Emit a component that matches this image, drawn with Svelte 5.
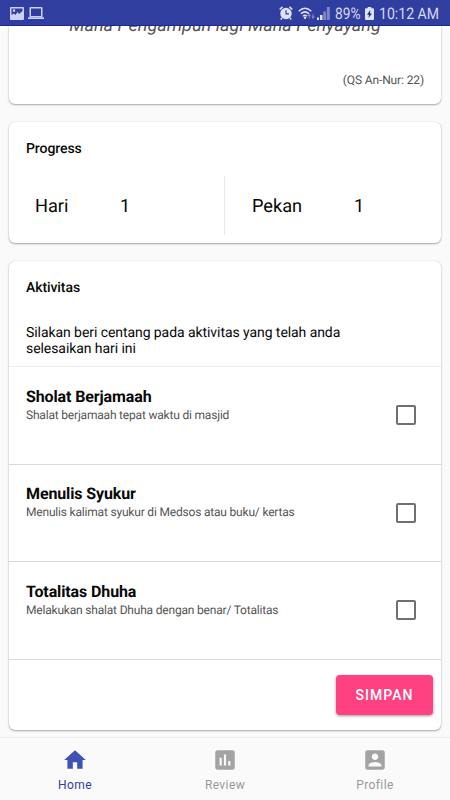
<script>
  const activities = $state([
    { title: 'Sholat Berjamaah', detail: 'Shalat berjamaah tepat waktu di masjid', done: false },
    { title: 'Menulis Syukur', detail: 'Menulis kalimat syukur di Medsos atau buku/ kertas', done: false },
    { title: 'Totalitas Dhuha', detail: 'Melakukan shalat Dhuha dengan benar/ Totalitas', done: false }
  ]);
  const tabs = [
    { label: 'Home', icon: 'M10 20v-6h4v6h5v-8h3L12 3 2 12h3v8z' },
    { label: 'Review', icon: 'M19 3H5c-1.1 0-2 .9-2 2v14c0 1.1.9 2 2 2h14c1.1 0 2-.9 2-2V5c0-1.1-.9-2-2-2zM9 17H7v-7h2v7zm4 0h-2V7h2v10zm4 0h-2v-4h2v4z' },
    { label: 'Profile', icon: 'M3 5v14c0 1.1.89 2 2 2h14c1.1 0 2-.9 2-2V5c0-1.1-.9-2-2-2H5c-1.11 0-2 .9-2 2zm12 4c0 1.66-1.34 3-3 3s-3-1.34-3-3 1.34-3 3-3 3 1.34 3 3zm-9 8c0-2 4-3.1 6-3.1s6 1.1 6 3.1v1H6v-1z' }
  ];
  let active = $state('Home');
</script>

<div class="screen">
  <header class="status">
    <svg class="picture" width="14" height="13" viewBox="0 0 14 13"><path fill-rule="evenodd" d="M1 0h12q1 0 1 1v11q0 1-1 1H1q-1 0-1-1V1q0-1 1-1zm.5 1.500v6.500L4 6.500l1.500 1.500 2-3 1.500 2 3.500-3V1.500zM4 2.300a1.300 1.300 0 1 1 0 2.600 1.300 1.300 0 0 1 0-2.600z"/></svg>
    <svg class="laptop" width="16" height="12" viewBox="0 0 16 12"><path fill-rule="evenodd" d="M2.500 0h11q1 0 1 1v9h-13V1q0-1 1-1zm.5 1.500V9h10V1.500zM0 10.300h16V12H0z"/></svg>
    <span class="grow"></span>
    <svg class="alarm" width="14" height="14" viewBox="0 0 14 14"><circle cx="7" cy="7.500" r="5.700"/><path d="M.7 3.500 3.500.8M10.500.8l2.800 2.700M3 12l-1.300 1.500M11 12l1.300 1.500" stroke="#dfe1f5" stroke-width="1.600"/><path d="M7 4.300v3.500h3" fill="none" stroke="#303f9f" stroke-width="1.200"/></svg>
    <svg class="wifi" width="17" height="13" viewBox="0 0 17 13"><path d="M.7 4.200Q7 -1.600 13.300 4.200M2.900 6.800Q7 3 11 6.800M5 9.200Q7 7.400 9 9.200" fill="none" stroke="#dfe1f5" stroke-width="1.500"/><circle cx="7" cy="10.700" r="1.200"/><path d="M11.200 6.500 13 9h-1.300v2.500h-1V9H9.500zm3.800 5.500-1.700-2.500h1.200V7h1v2.500h1.200z" opacity=".5"/></svg>
    <svg class="signal" width="13" height="13" viewBox="0 0 13 13"><path d="M0 10.500h2V13H0zM3 8h2.500v5H3z"/><path d="M6.300 4.500h2.700V13H6.300zM9.800 0h3v13h-3z" opacity=".45"/></svg>
    <span class="percent">89%</span>
    <svg class="battery" width="9" height="13" viewBox="0 0 9 13"><path d="M2.700 0h3.600v1.300H8q1 0 1 1V12q0 1-1 1H1q-1 0-1-1V2.300q0-1 1-1h1.700z"/><path d="M5.300 3 2 7.700h2L3.500 11 7 6.400H5z" fill="#202b70"/></svg>
    <span class="time">10:12 AM</span>
  </header>

  <main>
    <section class="card quote">
      <p class="verse">Maha Pengampun lagi Maha Penyayang</p>
      <p class="source">(QS An-Nur: 22)</p>
    </section>

    <section class="card progress">
      <h2>Progress</h2>
      <div class="stats">
        <div class="stat"><span class="name day">Hari</span><span>1</span></div>
        <div class="stat week"><span class="name">Pekan</span><span>1</span></div>
      </div>
    </section>

    <section class="card activities">
      <h2>Aktivitas</h2>
      <p class="hint">Silakan beri centang pada aktivitas yang telah anda<br />selesaikan hari ini</p>
      {#each activities as item}
        <label class="row">
          <span class="copy"><strong>{item.title}</strong><small>{item.detail}</small></span>
          <input type="checkbox" bind:checked={item.done} />
        </label>
      {/each}
      <div class="actions"><button class="save">SIMPAN</button></div>
    </section>
  </main>

  <nav>
    {#each tabs as tab}
      <button class="tab" class:active={active === tab.label} onclick={() => (active = tab.label)}>
        <svg width="26" height="26" viewBox="0 0 24 24"><path d={tab.icon} /></svg>
        <span>{tab.label}</span>
      </button>
    {/each}
  </nav>
</div>

<style>
  :global(body) { margin: 0; }
  .screen { width: 450px; height: 800px; overflow: hidden; display: flex; flex-direction: column; background: #fafafa; color: #080808; font-family: Roboto, sans-serif; text-rendering: geometricPrecision; }
  .screen * { box-sizing: border-box; }
  p, h2 { margin: 0; }
  .status { flex: none; height: 26px; display: flex; align-items: center; padding: 1px 11px 0 10px; background: #303f9f; border-bottom: 1px solid #1c2a8c; color: #d5d8f0; fill: #dfe1f5; font-size: 16px; line-height: 24px; white-space: nowrap; }
  .status svg { flex: none; }
  .picture, .laptop { fill: #cbd0f3; }
  .laptop { margin-left: 4px; }
  .grow { flex: 1; }
  .wifi { margin-left: 5px; }
  .signal { margin-left: 2px; }
  .percent, .time { padding-top: 2px; }
  .percent { width: 26px; margin-left: 5px; transform: scaleX(.86); transform-origin: left; }
  .battery { margin-left: 4px; }
  .time { width: 60px; margin-left: 5px; transform: scaleX(.88); transform-origin: left; }
  main { flex: 1; min-height: 0; overflow: hidden; padding: 0 9px; display: flex; flex-direction: column; }
  .card { flex: none; background: #fff; border-radius: 6px; box-shadow: 0 1px 2px rgba(0,0,0,.32), 0 0 1px rgba(0,0,0,.22); }
  .quote { height: 78px; border-radius: 0 0 6px 6px; }
  .verse { height: 24px; margin-top: -12px; text-align: center; color: #555; font-size: 18.050px; line-height: 24px; font-style: italic; white-space: nowrap; }
  .source { margin-top: 33px; padding-right: 17px; text-align: right; font-size: 12px; letter-spacing: -.120px; line-height: 18px; color: #555; }
  .progress { height: 121px; margin-top: 18px; padding: 17px 0 0; }
  h2 { padding-left: 17px; font-size: 14px; letter-spacing: -.080px; line-height: 21px; font-weight: 500; }
  .stats { display: flex; height: 59px; margin-top: 16px; }
  .stat { width: 215px; padding: 1px 0 0 26px; display: flex; align-items: center; font-size: 18.200px; }
  .week { padding-left: 27px; border-left: 1px solid #e8e8e8; }
  .name { width: 102px; }
  .day { width: 85px; }
  .activities { height: 469px; margin-top: 18px; padding-top: 17px; }
  .hint { height: 67px; padding: 26px 17px 0; font-size: 14px; letter-spacing: -.070px; line-height: 16px; }
  .row { height: 97.500px; display: flex; align-items: center; justify-content: space-between; padding: 0 25px 0 17px; border-top: 1px solid #d8d8d8; }
  .row:first-of-type { border-color: #ededed; }
  .copy { display: flex; flex-direction: column; align-self: flex-start; padding-top: 19.500px; }
  strong { font-size: 16px; letter-spacing: -.120px; line-height: 20px; font-weight: 700; }
  small { font-size: 12px; letter-spacing: -.190px; line-height: 17px; color: #555; }
  input { appearance: none; width: 20px; height: 20px; margin: 0; border: 2px solid #707070; border-radius: 2px; background: #fff; }
  input:checked { background: #303f9f; border-color: #303f9f; }
  .actions { border-top: 1px solid #d8d8d8; display: flex; justify-content: flex-end; padding: 15px 8px 0 0; }
  button { font-family: inherit; border: 0; padding: 0; }
  .save { width: 97px; height: 40px; border-radius: 4px; background: #ff4081; color: #fff; font-size: 14px; font-weight: 500; letter-spacing: 1px; box-shadow: 0 1px 3px rgba(0,0,0,.4); }
  nav { flex: none; height: 63px; display: flex; border-top: 1px solid #eee; background: #fafafa; }
  .tab { flex: 1; display: flex; flex-direction: column; align-items: center; padding-top: 9px; background: none; color: #999; fill: #a3a3a3; font-size: 12px; line-height: 16px; letter-spacing: .400px; }
  .tab span { margin-top: 4px; }
  .active { color: #303f9f; fill: #3f51b5; }
</style>
